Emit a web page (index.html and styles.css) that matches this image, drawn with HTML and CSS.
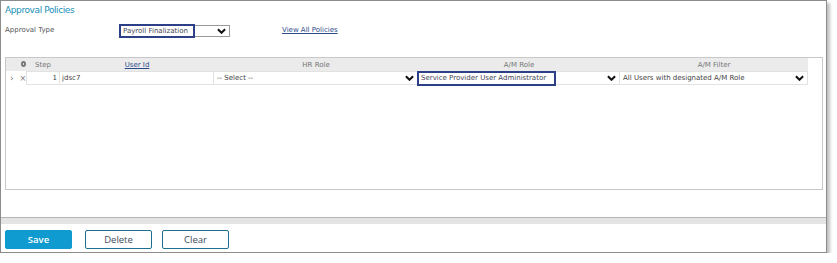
FILE: index.html
```html
<!DOCTYPE html>
<html lang="en">
<head>
    <meta charset="UTF-8">
    <title>Approval Policies</title>
    <link rel="stylesheet" href="styles.css">
</head>
<body>
    <div class="frame">
        <div class="content">
            <h1 class="title">Approval Policies</h1>

            <div class="type-row">
                <label class="label">Approval Type</label>
                <div class="select type-select">
                    <span class="hl">Payroll Finalization</span>
                    <svg class="chev" viewBox="0 0 10 6"><polyline points="1,1 5,5 9,1"/></svg>
                </div>
                <a class="link" href="#">View All Policies</a>
            </div>

            <!-- Steps grid -->
            <div class="grid">
                <div class="grid-head">
                    <div class="cell-icons"><span class="gear"></span></div>
                    <div class="h-step">Step</div>
                    <div class="h-center"><a href="#">User Id</a></div>
                    <div class="h-center">HR Role</div>
                    <div class="h-center">A/M Role</div>
                    <div class="h-center">A/M Filter</div>
                </div>
                <div class="grid-row">
                    <div class="cell-icons"><span class="arrow">&#8250;</span><span class="del">&times;</span></div>
                    <div class="cell step">1</div>
                    <div class="cell">jdsc7</div>
                    <div class="cell sel">
                        <span>-- Select --</span>
                        <svg class="chev" viewBox="0 0 10 6"><polyline points="1,1 5,5 9,1"/></svg>
                    </div>
                    <div class="cell sel role">
                        <span class="hl hl-role">Service Provider User Administrator</span>
                        <svg class="chev" viewBox="0 0 10 6"><polyline points="1,1 5,5 9,1"/></svg>
                    </div>
                    <div class="cell sel">
                        <span>All Users with designated A/M Role</span>
                        <svg class="chev" viewBox="0 0 10 6"><polyline points="1,1 5,5 9,1"/></svg>
                    </div>
                </div>
            </div>
        </div>

        <div class="band"></div>

        <div class="buttons">
            <button class="btn primary">Save</button>
            <button class="btn">Delete</button>
            <button class="btn">Clear</button>
        </div>
    </div>
</body>
</html>
```

FILE: styles.css
```css
body {
    margin: 0;
    background: #fff;
    font-family: "DejaVu Sans", Verdana, sans-serif;
    font-size: 7px;
    color: #555;
}

.frame {
    width: 825px;
    height: 251px;
    border: 1px solid #8c8c8c;
    box-shadow: 3px 3px 3px rgba(0, 0, 0, 0.25);
    display: flex;
    flex-direction: column;
    background: #fff;
}

.content {
    flex: 1;
    padding: 0 3px 0 4px;
}

.title {
    margin: 4px 0 0;
    font-size: 9px;
    line-height: 11px;
    font-weight: normal;
    color: #1a8fb6;
    letter-spacing: -0.4px;
}

.type-row {
    display: flex;
    align-items: center;
    margin-top: 8px;
    height: 14px;
}

.label {
    width: 114px;
    margin-top: -3px;
}

.select {
    display: flex;
    align-items: center;
    justify-content: space-between;
    border: 1px solid #999;
    height: 10px;
    box-sizing: content-box;
}

.type-select {
    width: 109px;
}

.hl {
    border: 2px solid #2d3f86;
    padding: 1px 2px;
    line-height: 8px;
    color: #445;
    background: #fff;
}

.type-select .hl {
    margin-left: -1px;
    width: 68px;
}

.chev {
    width: 9px;
    height: 6px;
    margin-right: 3px;
    fill: none;
    stroke: #111;
    stroke-width: 2.2;
}

.link {
    margin-left: 52px;
    margin-top: -3px;
    color: #2b4a8a;
    text-decoration: underline;
}

.grid {
    margin-top: 19px;
    height: 131px;
    border: 1px solid #c8c8c8;
}

.grid-head,
.grid-row {
    display: grid;
    grid-template-columns: 20px 34px 154px 204px 202px 188px;
    width: 802px;
}

.grid-head {
    height: 13px;
    align-items: center;
    background: #ebebeb;
    color: #777;
}

.h-step {
    padding-left: 9px;
}

.h-center {
    text-align: center;
}

.h-center a {
    color: #2b4a8a;
}

.cell-icons {
    display: flex;
    align-items: center;
    gap: 6px;
    padding-left: 4px;
    color: #777;
}

.gear {
    margin-left: 11px;
    margin-top: -2px;
    width: 2px;
    height: 2px;
    border-radius: 50%;
    background: #fff;
    border: 2.5px solid #777;
    box-sizing: content-box;
}

.grid-row {
    height: 13px;
    align-items: stretch;
}

.arrow {
    font-size: 9px;
    line-height: 10px;
}

.del {
    font-size: 8px;
}

.cell {
    display: flex;
    align-items: center;
    border: 1px solid #e2e2e2;
    border-left: none;
    padding-left: 2px;
    color: #444;
    overflow: hidden;
    white-space: nowrap;
}

.step {
    justify-content: flex-end;
    padding-right: 2px;
    border-left: 1px solid #e2e2e2;
}

.sel {
    justify-content: space-between;
    padding-left: 3px;
}

.cell.role {
    overflow: visible;
    position: relative;
}

.cell .hl-role {
    margin: -1px 0 -2px -4px;
    padding: 1px 2px;
    height: 9px;
    width: 131px;
    box-sizing: content-box;
}

.band {
    height: 6px;
    border-top: 1px solid #b5b5b5;
    background: #e4e4e4;
}

.buttons {
    display: flex;
    gap: 10px;
    padding: 6px 4px 3px;
}

.btn {
    width: 67px;
    height: 19px;
    border: 1px solid #1d6f8f;
    border-radius: 2px;
    background: #fff;
    font-family: "Open Sans", sans-serif;
    font-size: 9.5px;
    color: #3c4c5c;
}

.btn.primary {
    background: #0f9ad0;
    border-color: #0f9ad0;
    color: #fff;
    font-weight: 600;
    margin-right: 3px;
}
```
